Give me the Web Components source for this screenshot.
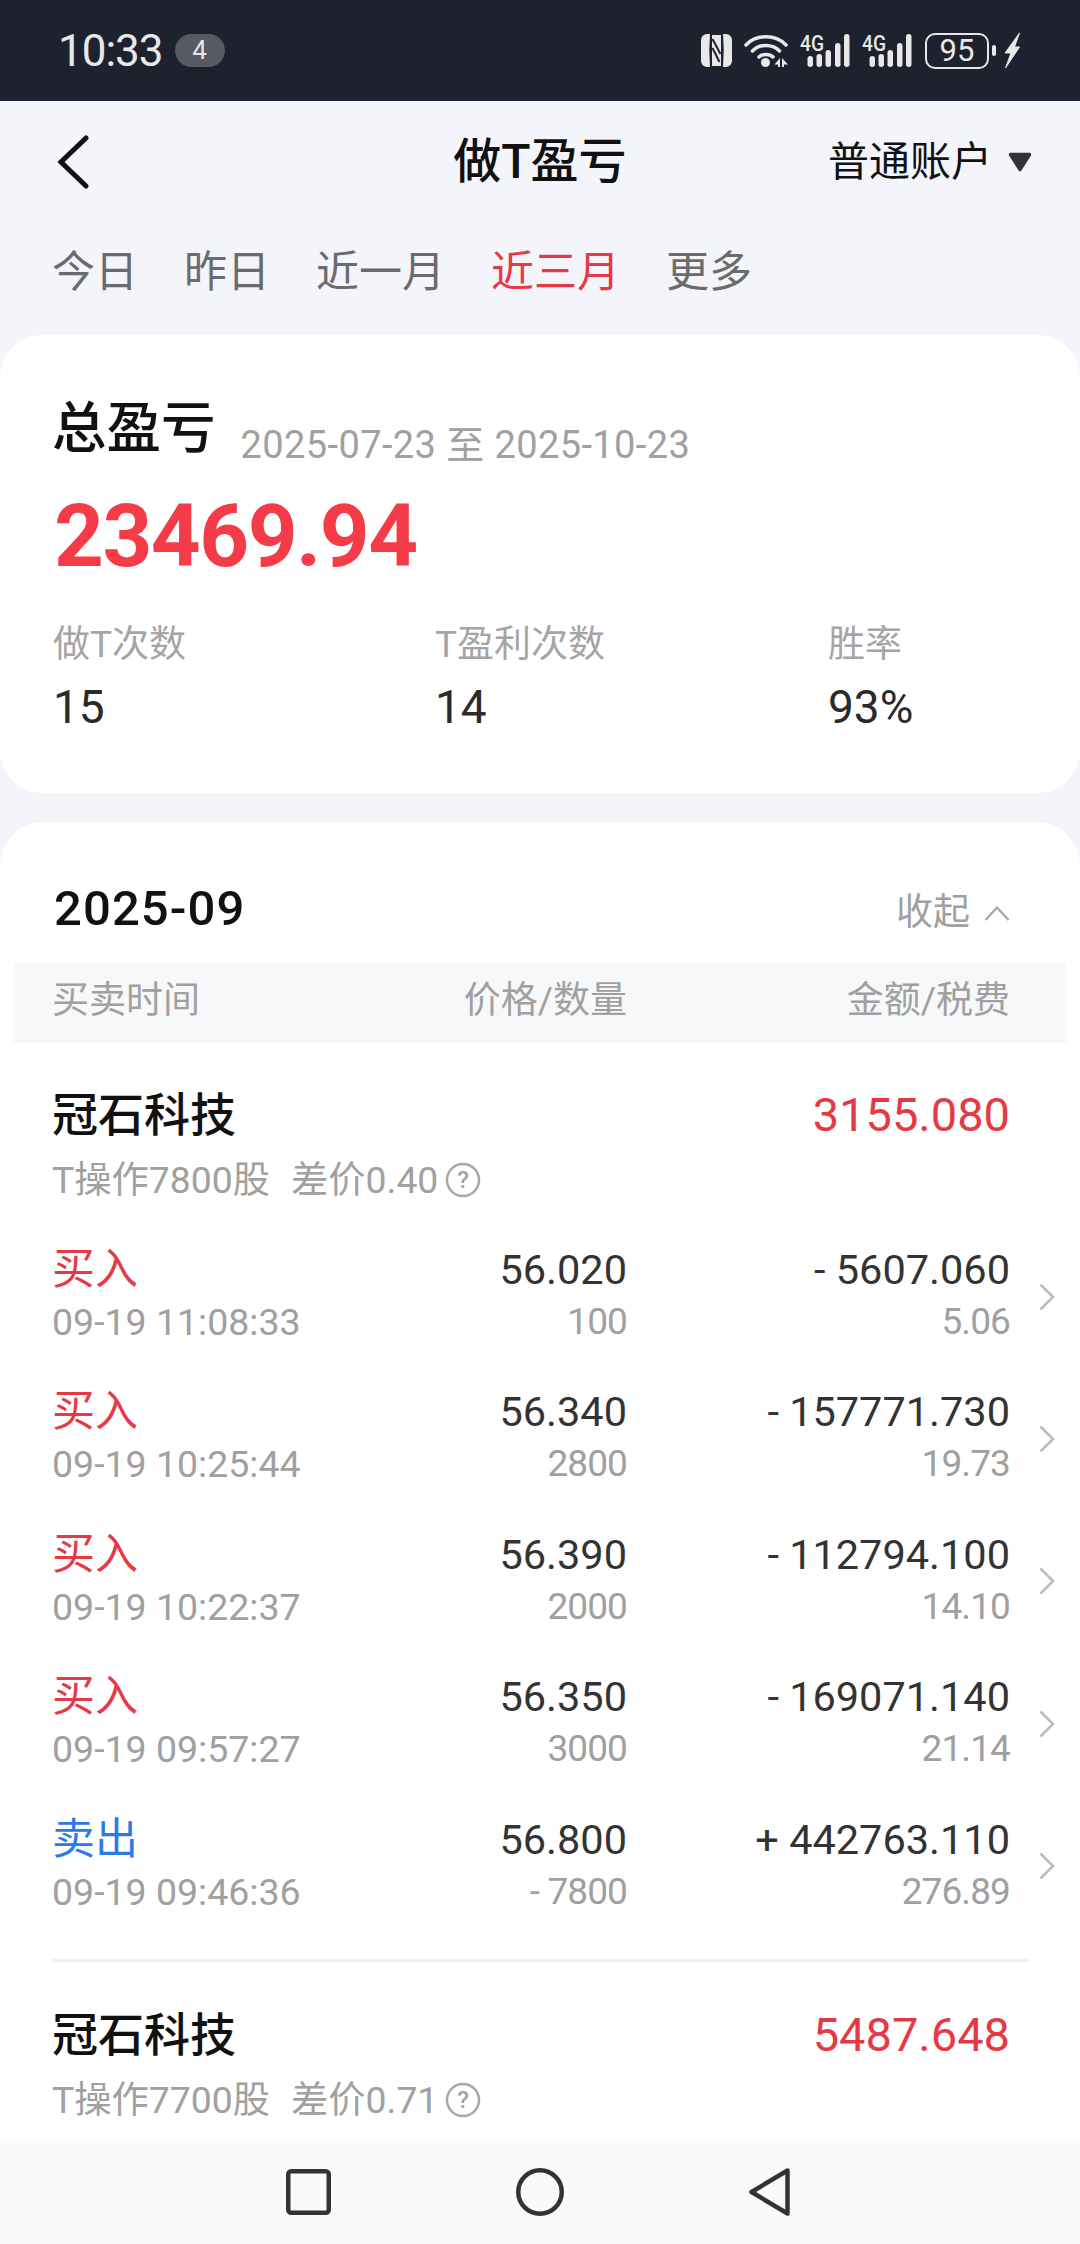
<!DOCTYPE html>
<html lang="zh">
<head>
<meta charset="utf-8">
<title>做T盈亏</title>
<style>
  html, body { margin: 0; padding: 0; background: #f4f5fa; }
  body { font-family: Roboto, "Noto Sans CJK SC", sans-serif; }
</style>
</head>
<body>
<trade-app>
  <status-bar time="10:33" badge="4" battery="95"></status-bar>
  <nav-header>做T盈亏</nav-header>
  <range-tabs tabs="今日,昨日,近一月,近三月,更多" active="3"></range-tabs>
  <summary-card total="23469.94" range="2025-07-23 至 2025-10-23">
    <stat-item label="做T次数" value="15"></stat-item>
    <stat-item label="T盈利次数" value="14"></stat-item>
    <stat-item label="胜率" value="93%"></stat-item>
  </summary-card>
  <month-card month="2025-09">
    <trade-group name="冠石科技" profit="3155.080" shares="7800" spread="0.40">
      <trade-row side="买入" time="09-19 11:08:33" price="56.020" qty="100" amount="- 5607.060" fee="5.06"></trade-row>
      <trade-row side="买入" time="09-19 10:25:44" price="56.340" qty="2800" amount="- 157771.730" fee="19.73"></trade-row>
      <trade-row side="买入" time="09-19 10:22:37" price="56.390" qty="2000" amount="- 112794.100" fee="14.10"></trade-row>
      <trade-row side="买入" time="09-19 09:57:27" price="56.350" qty="3000" amount="- 169071.140" fee="21.14"></trade-row>
      <trade-row side="卖出" time="09-19 09:46:36" price="56.800" qty="- 7800" amount="+ 442763.110" fee="276.89"></trade-row>
    </trade-group>
    <trade-group name="冠石科技" profit="5487.648" shares="7700" spread="0.71"></trade-group>
  </month-card>
  <nav-bar slot="bottom"></nav-bar>
</trade-app>

<script>
const FONT = `Roboto, "Noto Sans CJK SC", sans-serif`;

// small helper, every element below is the same shape: template + open shadow root
const define = (name, template) => {
  customElements.define(name, class extends HTMLElement {
    constructor() {
      super();
      this.attachShadow({ mode: "open" });
    }
    connectedCallback() {
      const props = {};
      for (const a of this.attributes) props[a.name] = a.value;
      this.shadowRoot.innerHTML = template(props);
    }
  });
};

define("trade-app", () => `
  <style>
    :host { display: flex; flex-direction: column; width: 1080px; height: 2244px; overflow: hidden; background: #f4f5fa; font-family: ${FONT}; }
    #content { flex: 1; min-height: 0; display: flex; flex-direction: column; overflow: hidden; }
  </style>
  <div id="content"><slot></slot></div>
  <slot name="bottom"></slot>
`);

const signal = (mr) => `
  <svg class="sig" style="margin-right:${mr}px" width="50" height="39" viewBox="0 -6 50 39">
    <text x="0" y="17" font-size="22" font-weight="500" textLength="24" lengthAdjust="spacingAndGlyphs">4G</text>
    <rect x="7.500" y="22" width="5.500" height="11" rx="2.700"/>
    <rect x="16.500" y="20" width="5.500" height="13" rx="2.700"/>
    <rect x="25.500" y="16" width="5.500" height="17" rx="2.700"/>
    <rect x="35" y="9" width="5.500" height="24" rx="2.700"/>
    <rect x="44" y="0" width="5.500" height="33" rx="2.700"/>
  </svg>`;

define("status-bar", (props) => `
  <style>
    :host { display: flex; align-items: center; flex: none; height: 101px; padding: 0 60px 0 58px; background: #1e222e; color: #e8e8e8; }
    #time { font-size: 44px; line-height: 50px; letter-spacing: -1px; }
    #badge { margin-left: 12px; width: 50px; height: 33px; border-radius: 17px; background: #565a63; font-size: 26px; line-height: 33px; text-align: center; }
    #icons { margin-left: auto; display: flex; align-items: center; }
    svg { display: block; fill: #e8e8e8; }
    svg text { font-family: ${FONT}; }
    #nfc, #wifi { margin-right: 12px; }
    .sig { margin-top: -6px; }
    #batt { box-sizing: border-box; width: 64px; height: 36px; border: 2.500px solid #e8e8e8; border-radius: 10px; font-size: 31px; line-height: 31px; text-align: center; }
    #nub { margin-left: 3px; width: 4px; height: 11px; border-radius: 2px; background: #e8e8e8; }
    #bolt { margin-left: 8px; }
  </style>
  <span id="time">${props.time}</span>
  <span id="badge">${props.badge}</span>
  <div id="icons">
    <svg id="nfc" width="31" height="33" viewBox="0 0 31 33">
      <path d="M6 0H9Q7.500 16 9 33H6A6 6 0 0 1 0 27V6A6 6 0 0 1 6 0z"/>
      <path d="M25 0H22Q23.500 16 22 33H25A6 6 0 0 0 31 27V6A6 6 0 0 0 25 0z"/>
      <path d="M11 1H20V32H11z"/>
      <path d="M11.500 5 19.500 20M11.500 14 18.500 28" fill="none" stroke="#1e222e" stroke-width="2"/>
    </svg>
    <svg id="wifi" width="44" height="34" viewBox="0 0 44 34" fill="none">
      <path d="M2 11C12 0 32 0 42 11" fill="none" stroke="#e8e8e8" stroke-width="3.500" stroke-linecap="round"/>
      <path d="M8.500 17C15 9.500 29 9.500 35.500 17" fill="none" stroke="#e8e8e8" stroke-width="3.500" stroke-linecap="round"/>
      <path d="M15 23C18 19.500 26 19.500 29 23" fill="none" stroke="#e8e8e8" stroke-width="3.500" stroke-linecap="round"/>
      <circle cx="21.500" cy="28.500" r="4.500"/>
      <path d="M36 24V33H34V30.500H30.500zM38 24 44 30.500H40V33H38z"/>
    </svg>
    ${signal(12)}
    ${signal(13)}
    <div id="batt">${props.battery}</div>
    <div id="nub"></div>
    <svg id="bolt" width="16" height="37" viewBox="0 0 16 37"><path d="M15.500 1 1 21 7 21 1.500 36 15.500 15 10.500 15z" stroke="#e8e8e8" stroke-width="1" stroke-linejoin="round"/></svg>
  </div>
`);

define("nav-header", () => `
  <style>
    :host { display: grid; grid-template-columns: 1fr auto 1fr; align-items: center; flex: none; height: 122px; padding: 0 48px; color: #111; }
    #back { display: block; margin-left: 9px; }
    #title { font-size: 48px; font-weight: 500; line-height: 60px; }
    #account { justify-self: end; display: flex; align-items: center; font-size: 41px; line-height: 50px; gap: 16px; }
  </style>
  <svg id="back" width="34" height="54" viewBox="0 0 34 54"><path d="M29 3 4 27 29 51" fill="none" stroke="#111" stroke-width="5" stroke-linecap="round" stroke-linejoin="miter"/></svg>
  <span id="title"><slot></slot></span>
  <div id="account">普通账户
    <svg width="24" height="20" viewBox="0 0 24 20"><path d="M2.500 2.500H21.500L12 17.500z" fill="#333" stroke="#333" stroke-width="3.500" stroke-linejoin="round"/></svg>
  </div>
`);

define("range-tabs", (props) => `
  <style>
    :host { display: flex; flex: none; height: 94px; margin-bottom: 18px; padding: 3px 0 0 52px; gap: 46px; align-items: center; box-sizing: border-box; font-size: 43px; line-height: 56px; color: #6b6b6b; }
    .on { color: #e63946; }
  </style>
  ${props.tabs.split(",").map((t, i) => `<span class="${i == props.active ? "on" : ""}">${t}</span>`).join("")}
`);

define("summary-card", (props) => `
  <style>
    :host { display: block; flex: none; box-sizing: border-box; height: 458px; padding-top: 63px; border-radius: 42px; background: #fff; }
    #head { display: flex; align-items: flex-end; padding-left: 52px; }
    #head b { font-size: 54.500px; font-weight: 500; line-height: 60px; color: #111; }
    #head span { margin: 0 0 -9px 25px; font-size: 38px; line-height: 44px; letter-spacing: 0.400px; color: #a0a0a0; }
    #total { padding-left: 54px; margin-top: 28px; font-size: 87px; font-weight: 700; line-height: 100px; letter-spacing: -1.500px; color: #f53b47; }
    #stats { display: grid; grid-template-columns: 382px 393px 1fr; margin-top: 34px; padding-left: 53px; }
  </style>
  <div id="head"><b>总盈亏</b><span>${props.range}</span></div>
  <div id="total">${props.total}</div>
  <div id="stats"><slot></slot></div>
`);

define("stat-item", (props) => `
  <style>
    :host { display: block; }
    #label { font-size: 37px; line-height: 50px; color: #a5a5a5; }
    #value { margin-top: 12px; font-size: 46px; line-height: 50px; color: #2a2a2a; }
  </style>
  <div id="label">${props.label}</div>
  <div id="value">${props.value}</div>
`);

define("month-card", (props) => `
  <style>
    :host { display: block; flex: 1; margin-top: 29px; border-radius: 44px 44px 0 0; background: #fff; overflow: hidden; }
    #head { display: flex; align-items: center; justify-content: space-between; height: 141px; box-sizing: border-box; padding: 32px 70px 0 54px; }
    #month { font-size: 49px; font-weight: 500; line-height: 60px; letter-spacing: 1.100px; color: #111; }
    #fold { display: flex; align-items: center; gap: 14px; padding-top: 8px; font-size: 37px; line-height: 50px; color: #a0a0a0; }
    #band { display: grid; grid-template-columns: 300px 275px 383px; box-sizing: border-box; height: 80px; padding: 0 0 4px 38px; align-items: center; margin: 0 14px; background: #f7f8fa; font-size: 37px; line-height: 50px; color: #a0a0a0; }
    #band span + span { text-align: right; }
  </style>
  <div id="head">
    <span id="month">${props.month}</span>
    <span id="fold">收起
      <svg width="26" height="16" viewBox="0 0 26 16"><path d="M1.500 15 13 2.500 24.500 15" fill="none" stroke="#aaa" stroke-width="2.500"/></svg>
    </span>
  </div>
  <div id="band"><span>买卖时间</span><span>价格/数量</span><span>金额/税费</span></div>
  <slot></slot>
`);

define("trade-group", (props) => `
  <style>
    :host { display: block; }
    #head { padding: 42px 70px 0 52px; }
    #name { display: flex; justify-content: space-between; line-height: 60px; }
    #name b { font-size: 46px; font-weight: 500; color: #111; }
    #name span { font-size: 47px; color: #e63946; }
    #sub { display: flex; align-items: center; margin-top: 10px; font-size: 37.300px; line-height: 50px; color: #a0a0a0; }
    #sub em { font-style: normal; margin-left: 21px; }
    #sub svg { margin-left: 7px; display: block; }
    #rows { padding-top: 39px; }
    :host(:last-child) #line { display: none; }
    #line { height: 3px; margin: 3px 51px 1px 52px; background: #f0f0f0; }
  </style>
  <div id="head">
    <div id="name"><b>${props.name}</b><span>${props.profit}</span></div>
    <div id="sub">T操作${props.shares}股<em>差价${props.spread}</em>
      <svg width="36" height="36" viewBox="0 0 36 36"><circle cx="18" cy="18" r="16" fill="none" stroke="#a8a8a8" stroke-width="2.500"/><text x="18" y="26" font-size="24" font-weight="500" text-anchor="middle" fill="#a0a0a0" font-family="Roboto, sans-serif">?</text></svg>
    </div>
  </div>
  <div id="rows"><slot></slot></div>
  <div id="line"></div>
`);

define("trade-row", (props) => `
  <style>
    :host { display: grid; grid-template-columns: 300px 275px 383px auto; box-sizing: border-box; height: 142.400px; padding-left: 52px; align-content: start; }
    .main { line-height: 51px; font-size: 41.500px; color: #333; text-align: right; }
    .sub { line-height: 54px; font-size: 37px; letter-spacing: -0.900px; color: #a0a0a0; text-align: right; }
    #side { text-align: left; font-size: 43px; color: ${props.side === "买入" ? "#e63946" : "#2a7be8"}; }
    #time { text-align: left; font-size: 37.500px; letter-spacing: 0; }
    #go { grid-column: 4; grid-row: 1 / 3; align-self: center; margin-left: 29px; display: block; }
  </style>
  <span class="main" id="side">${props.side}</span>
  <span class="main">${props.price}</span>
  <span class="main">${props.amount}</span>
  <svg id="go" width="16" height="28" viewBox="0 0 16 28"><path d="M1.500 1.500 14 14 1.500 26.500" fill="none" stroke="#bbb" stroke-width="2.500"/></svg>
  <span class="sub" id="time">${props.time}</span>
  <span class="sub">${props.qty}</span>
  <span class="sub">${props.fee}</span>
`);

define("nav-bar", () => `
  <style>
    :host { display: flex; flex: none; align-items: center; justify-content: center; height: 104px; padding-right: 4px; box-sizing: border-box; gap: 185px; background: #fafafa; }
    svg { display: block; fill: none; stroke: #333; stroke-width: 4.500; }
  </style>
  <svg width="45" height="46" viewBox="0 0 45 46"><rect x="2.250" y="2.250" width="40.500" height="41.500" rx="3"/></svg>
  <svg width="48" height="48" viewBox="0 0 48 48"><circle cx="24" cy="24" r="21.750"/></svg>
  <svg width="41" height="48" viewBox="0 0 41 48"><path d="M38.500 2.500 2.500 24 38.500 45.500z" stroke-linejoin="round"/></svg>
`);
</script>
</body>
</html>
